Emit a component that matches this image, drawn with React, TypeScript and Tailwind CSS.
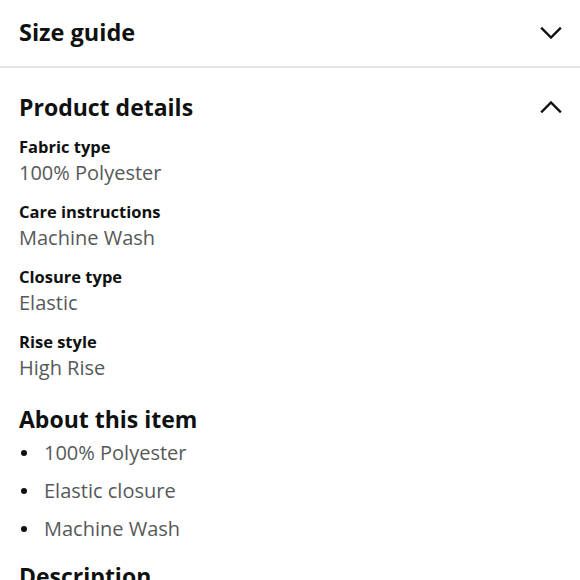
const details = [
  { label: "Fabric type", value: "100% Polyester" },
  { label: "Care instructions", value: "Machine Wash" },
  { label: "Closure type", value: "Elastic" },
  { label: "Rise style", value: "High Rise" },
];

const bullets = ["100% Polyester", "Elastic closure", "Machine Wash"];

function Chevron({ up }: { up?: boolean }) {
  return (
    <svg width="22" height="12" viewBox="0 0 22 12" fill="none" className="mr-[-1px]">
      <polyline
        points={up ? "2,10.5 11,1.5 20,10.5" : "2,1.5 11,10.5 20,1.5"}
        stroke="#0f1111"
        strokeWidth="2.4"
        strokeLinecap="square"
      />
    </svg>
  );
}

export default function App() {
  return (
    <div className="h-[580px] w-[580px] overflow-hidden bg-white font-['Open_Sans',sans-serif] text-[#0f1111]">
      <div className="flex h-[66px] items-center justify-between px-[19px]">
        <h2 className="text-[23.5px] font-bold">Size guide</h2>
        <Chevron />
      </div>
      <div className="h-[2px] bg-[#e3e6e6]" />

      <div className="px-[19px]">
        <div className="flex items-center justify-between pt-[20px]">
          <h2 className="text-[23px] font-bold leading-[38px]">Product details</h2>
          <Chevron up />
        </div>

        <dl className="mt-[10px] flex flex-col gap-[13px]">
          {details.map((d) => (
            <div key={d.label}>
              <dt className="text-[16.5px] font-bold leading-[22px]">{d.label}</dt>
              <dd className="text-[20px] leading-[30px] text-[#565959]">{d.value}</dd>
            </div>
          ))}
        </dl>

        <h2 className="mt-[21px] text-[23px] font-bold leading-[30px]">About this item</h2>
        <ul className="flex flex-col">
          {bullets.map((b) => (
            <li key={b} className="flex items-center text-[20px] leading-[38px] text-[#565959]">
              <span className="mr-[17px] ml-[2px] h-[6px] w-[6px] rounded-full bg-[#0f1111]" />
              {b}
            </li>
          ))}
        </ul>

        <h2 className="mt-[11px] text-[23px] font-bold leading-[34px]">Description</h2>
      </div>
    </div>
  );
}
